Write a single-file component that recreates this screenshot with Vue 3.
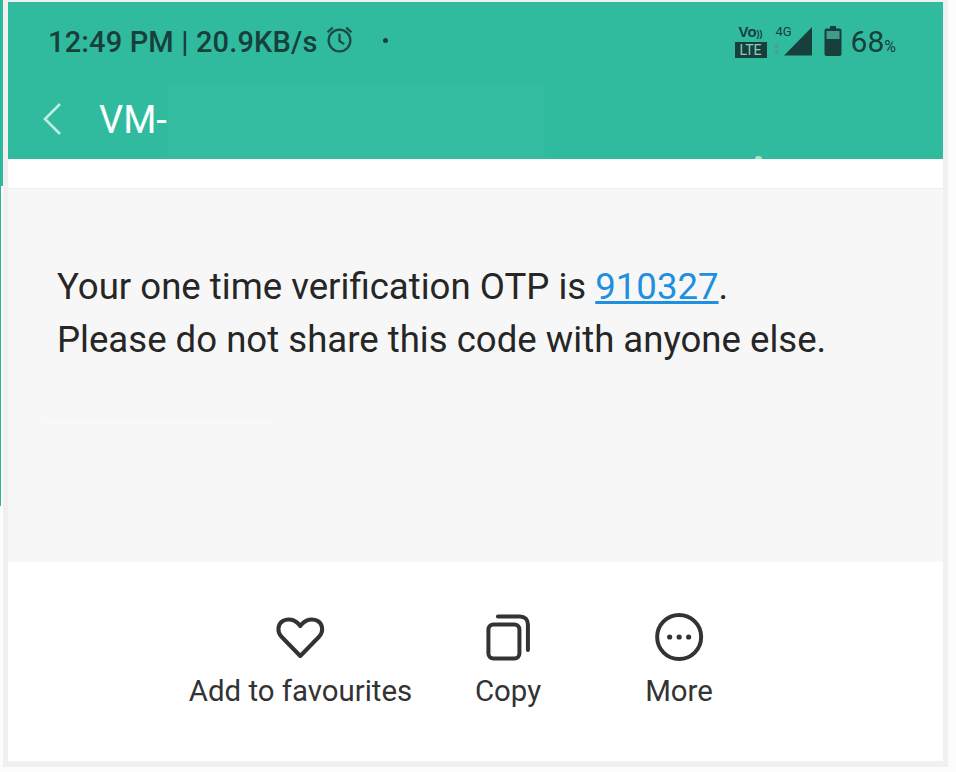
<script setup>
const actions = [
  { label: 'Add to favourites', icon: 'heart' },
  { label: 'Copy', icon: 'copy' },
  { label: 'More', icon: 'more' },
]
</script>

<template>
  <div class="page">
    <div class="edge"><div class="edge-teal"></div></div>
    <div class="frame">
      <div class="phone">
        <header class="header">
          <div class="patch"></div>
          <div class="spark"></div>
          <div class="status">
            <div class="status-left">
              <span class="clock">12:49 PM | 20.9KB/s</span>
              <svg class="alarm" viewBox="0 0 28 28" width="29" height="29" fill="none" stroke="#1c4a45" stroke-width="2.2">
                <circle cx="14" cy="15" r="10.5" />
                <path d="M14 8.5V15.5L18.5 18.5" />
                <path d="M2.5 7L7.5 2.5M25.5 7L20.5 2.5" />
              </svg>
              <span class="dot"></span>
            </div>
            <div class="status-right">
              <span class="volte">
                <span class="vo">Vo<i>))</i></span>
                <span class="lte">LTE</span>
              </span>
              <span class="signal">
                <span class="net">4G</span>
                <svg viewBox="0 0 28 29" width="28" height="29">
                  <path d="M0 28.5L28 0V28.5Z" fill="#17403c" />
                  <path d="M-10 21l2.500-4 2.500 4zM-10 23l2.500 4 2.500-4z" fill="#4f9d8d" />
                </svg>
              </span>
              <svg class="battery" viewBox="0 0 18 30" width="18" height="30">
                <path d="M6 0H12V2.500H15.500A2 2 0 0 1 17.500 4.500V28A2 2 0 0 1 15.500 30H2.500A2 2 0 0 1 .5 28V4.500A2 2 0 0 1 2.500 2.500H6Z" fill="#17403c" />
                <rect x="2.500" y="5" width="13" height="8" fill="#3f9b8b" />
              </svg>
              <span class="level">68<small>%</small></span>
            </div>
          </div>
          <div class="title-row">
            <svg class="back" viewBox="0 0 20 34" width="20" height="34" fill="none" stroke="#bfeee2" stroke-width="2.600">
              <path d="M18 2L3 17L18 32" />
            </svg>
            <span class="title">VM-</span>
          </div>
        </header>
        <div class="gap"></div>
        <main class="message">
          <p>Your one time verification OTP is <a href="#">910327</a>.</p>
          <p>Please do not share this code with anyone else.</p>
          <div class="smudge"></div>
        </main>
        <footer class="actions">
          <div v-for="a in actions" :key="a.label" class="action" :class="a.icon">
            <svg v-if="a.icon === 'heart'" viewBox="0 0 50 50" width="50" height="50" fill="none" stroke="#333" stroke-width="4" stroke-linejoin="round">
              <path d="M25 44L6 24.500C1.500 19.500 2.500 12 7.500 9C12.500 6 20 7 25 14C30 7 37.500 6 42.500 9C47.500 12 48.500 19.500 44 24.500Z" />
            </svg>
            <svg v-else-if="a.icon === 'copy'" viewBox="0 0 50 50" width="50" height="50" fill="none" stroke="#333" stroke-width="4" stroke-linecap="round">
              <rect x="5.500" y="12.500" width="31" height="34" rx="5" />
              <path d="M15 4.500H37C42 4.500 45 7.500 45 12.500V38" />
            </svg>
            <svg v-else viewBox="0 0 50 50" width="50" height="50" fill="none" stroke="#333" stroke-width="4">
              <circle cx="25" cy="25" r="22" />
              <g fill="#333" stroke="none">
                <circle cx="15.500" cy="25" r="2.600" />
                <circle cx="25" cy="25" r="2.600" />
                <circle cx="34.500" cy="25" r="2.600" />
              </g>
            </svg>
            <span>{{ a.label }}</span>
          </div>
        </footer>
      </div>
    </div>
  </div>
</template>

<style>
html, body { margin: 0; background: #fff; }
</style>

<style scoped>
.page {
  width: 956px;
  height: 772px;
  display: flex;
  align-items: flex-start;
  background: #fcfcfc;
  overflow: hidden;
  font-family: Roboto, "Liberation Sans", sans-serif;
}
.edge { width: 3px; height: 506px; flex: none; position: relative; background: linear-gradient(90deg, #2fb99c 1px, #fff 1px); }
.edge-teal { width: 3px; height: 186px; background: #2fb99c; }
.frame { width: 945px; height: 767px; box-sizing: border-box; background: #f0f0f0; padding: 2px 5px 6px; }
.phone { width: 935px; height: 759px; display: flex; flex-direction: column; background: #fff; }
.header { height: 157px; background: #31bb9e; box-sizing: border-box; display: flex; flex-direction: column; position: relative; }
.patch { position: absolute; left: 159px; top: 82px; width: 378px; height: 75px; background: #33bc9f; }
.spark { position: absolute; left: 747px; top: 154px; width: 7px; height: 3px; border-radius: 4px 4px 0 0; background: #9fe8c0; }
.status { height: 78px; display: flex; justify-content: space-between; align-items: center; padding: 2px 47px 0 40px; box-sizing: border-box; position: relative; }
.status-left, .status-right { display: flex; align-items: center; }
.clock { font-size: 29px; color: #17403c; font-weight: 500; letter-spacing: 0.15px; }
.alarm { margin: -6px 0 0 7px; }
.dot { width: 5px; height: 5px; border-radius: 50%; background: #17403c; margin: -3px 0 0 29px; }
.volte { display: flex; flex-direction: column; align-items: center; width: 32px; margin: -2px 9px 0 0; color: #17403c; }
.vo { font: 800 15px/13px "Liberation Sans", sans-serif; }
.vo i { font-style: normal; font-size: 9px; }
.lte { width: 32px; height: 16px; background: #17403c; color: #8fcdbf; font: 400 14px/16px "Roboto", sans-serif; text-align: center; margin-top: 1px; }
.signal { position: relative; width: 36px; height: 30px; display: flex; justify-content: flex-end; margin: -2px 12px 0 0; }
.signal svg { overflow: visible; align-self: flex-end; }
.net { position: absolute; left: 0; top: -2px; font-size: 13px; color: #17403c; }
.battery { margin: -2px 9px 0 0; }
.level { font-size: 30px; color: #17403c; position: relative; top: -1px; }
.level small { font-size: 16px; }
.title-row { flex: 1; display: flex; align-items: center; padding: 0 0 0 34px; position: relative; margin-top: -2px; }
.back { margin-right: 37px; }
.title { font-size: 38px; color: #fbfffe; font-weight: 400; position: relative; top: 1px; }
.gap { height: 29px; background: #fff; border-bottom: 1px solid #e4f2f2; }
.message { height: 373px; background: #f7f7f7; box-sizing: border-box; padding: 71px 0 0 49px; font-size: 36.600px; line-height: 53px; color: #262626; position: relative; }
.message p { margin: 0; }
.message a { color: #1f8fe0; }
.smudge { position: absolute; left: 36px; top: 233px; width: 226px; height: 1px; background: #fcfcfc; }
.actions { flex: 1; display: flex; background: #fff; position: relative; }
.action { position: absolute; top: 50px; transform: translateX(-50%); display: flex; flex-direction: column; align-items: center; color: #333; font-size: 29.400px; white-space: nowrap; }
.action span { margin-top: 12px; line-height: 34px; }
.action.heart { left: 292.500px; }
.action.copy { left: 500px; }
.action.more { left: 671px; }
</style>
